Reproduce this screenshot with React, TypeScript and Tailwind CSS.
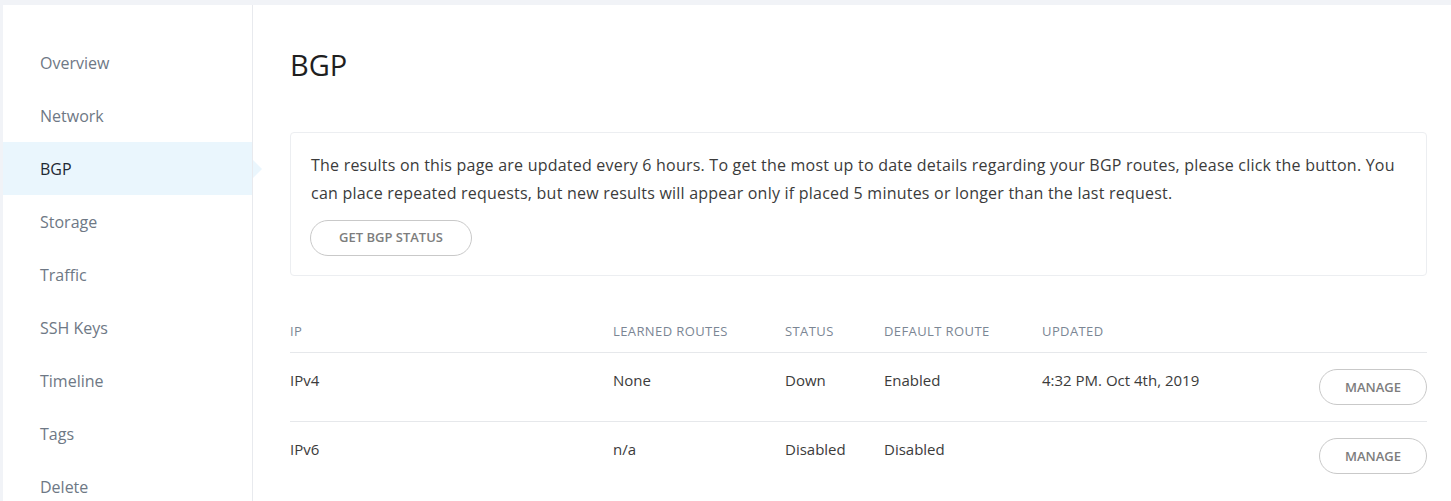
import React from 'react';

const navItems = ['Overview', 'Network', 'BGP', 'Storage', 'Traffic', 'SSH Keys', 'Timeline', 'Tags', 'Delete'];

const rows = [
  { ip: 'IPv4', routes: 'None', status: 'Down', def: 'Enabled', updated: '4:32 PM. Oct 4th, 2019' },
  { ip: 'IPv6', routes: 'n/a', status: 'Disabled', def: 'Disabled', updated: '' },
];

const grid = 'grid grid-cols-[323px_172px_99px_158px_1fr_auto]';

const App = () => {
  return (
    <div
      className="min-h-screen bg-[#f1f3f7] pt-[5px] pl-[3px]"
      style={{ fontFamily: '"Open Sans", "Liberation Sans", sans-serif' }}
    >
      <div className="flex bg-white min-h-[496px]">
        {/* Sidebar */}
        <div className="w-[250px] shrink-0 border-r border-[#e8eaee] pt-[31px]">
          {navItems.map((item) => {
            const active = item === 'BGP';
            return (
              <div
                key={item}
                className={
                  'relative h-[53px] flex items-center pl-[37px] text-[16px] ' +
                  (active ? 'bg-[#eaf6fd] text-[#1e2833]' : 'text-[#6e7885]')
                }
              >
                {item}
                {active && (
                  <span className="absolute right-[-10px] top-1/2 -translate-y-1/2 w-0 h-0 border-y-[9px] border-y-transparent border-l-[9px] border-l-[#eaf6fd]" />
                )}
              </div>
            );
          })}
        </div>

        {/* Main */}
        <div className="flex-1 pl-[37px] pr-[24px] pt-[43px]">
          <h1 className="text-[29px] leading-[34px] text-[#1f1f1f] font-normal">BGP</h1>

          <div className="mt-[50px] border border-[#eceef1] rounded-[4px] pl-[20px] pr-[20px] pt-[18px] pb-[19px]">
            <p className="text-[16px] leading-[28px] tracking-[0.22px] text-[#3b3b3b]">
              The results on this page are updated every 6 hours. To get the most up to date details regarding your BGP routes, please click the button. You can place repeated requests, but new results will appear only if placed 5 minutes or longer than the last request.
            </p>
            <button className="mt-[13px] -ml-px h-[36px] w-[162px] rounded-full border border-[#c9c9c9] text-[13px] font-semibold text-[#7d7d7d] uppercase">
              Get BGP Status
            </button>
          </div>

          <div className="mt-[35px]">
            <div className={grid + ' h-[42px] items-center border-b border-[#e6e8eb] text-[13px] tracking-[0.4px] text-[#7b8694] uppercase'}>
              <div>IP</div>
              <div>Learned Routes</div>
              <div>Status</div>
              <div>Default Route</div>
              <div>Updated</div>
              <div />
            </div>
            {rows.map((r, i) => (
              <div
                key={r.ip}
                className={
                  grid +
                  ' items-start pt-[16px] pb-[16px] text-[15px] leading-[22px] text-[#3b3b3b] ' +
                  (i < rows.length - 1 ? 'border-b border-[#e6e8eb]' : '')
                }
              >
                <div>{r.ip}</div>
                <div>{r.routes}</div>
                <div>{r.status}</div>
                <div>{r.def}</div>
                <div>{r.updated}</div>
                <button className="h-[36px] w-[108px] rounded-full border border-[#c9c9c9] text-[13px] font-semibold text-[#7d7d7d] uppercase leading-none">
                  Manage
                </button>
              </div>
            ))}
          </div>
        </div>
      </div>
    </div>
  );
};

export default App;
